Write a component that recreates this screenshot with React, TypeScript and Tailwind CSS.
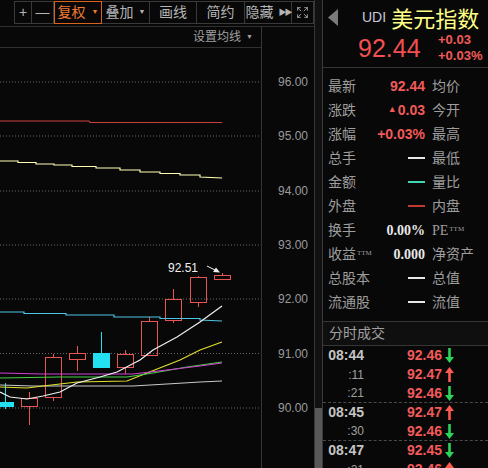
import React from 'react';
import { Expand } from 'lucide-react';

const RED = '#f25a5a';

type Info = { label: React.ReactNode; value: React.ReactNode; label2: React.ReactNode };

const Dash = ({ color }: { color: string }) => (
  <span className="inline-block w-[17px] h-[1.5px]" style={{ backgroundColor: color }} />
);

const Ttm = () => <sup className="text-[7px] font-['Liberation_Serif',serif] ml-[1px] relative -top-[4px]">TTM</sup>;

const infoRows: Info[] = [
  { label: '最新', value: <span className="font-bold text-[#f25a5a]">92.44</span>, label2: '均价' },
  {
    label: '涨跌',
    value: (
      <span className="font-bold text-[#f25a5a] flex items-center">
        <span className="text-[9px] mr-[1px]">▲</span>0.03
      </span>
    ),
    label2: '今开',
  },
  { label: '涨幅', value: <span className="font-bold text-[#f25a5a]">+0.03%</span>, label2: '最高' },
  { label: '总手', value: <Dash color="#e6e6e6" />, label2: '最低' },
  { label: '金额', value: <Dash color="#3fd6b8" />, label2: '量比' },
  { label: '外盘', value: <Dash color="#c03a34" />, label2: '内盘' },
  {
    label: '换手',
    value: <span className="font-bold text-[#e8e8e8] font-['Liberation_Serif',serif]">0.00%</span>,
    label2: (
      <span className="font-['Liberation_Serif',serif]">
        PE<Ttm />
      </span>
    ),
  },
  {
    label: (
      <span>
        收益<Ttm />
      </span>
    ),
    value: <span className="font-bold text-[#e8e8e8] font-['Liberation_Serif',serif]">0.000</span>,
    label2: '净资产',
  },
  { label: '总股本', value: <Dash color="#e6e6e6" />, label2: '总值' },
  { label: '流通股', value: <Dash color="#e6e6e6" />, label2: '流值' },
];

const trades = [
  { t: '08:44', main: true, p: '92.46', up: false, sep: false },
  { t: ':11', main: false, p: '92.47', up: true, sep: false },
  { t: ':21', main: false, p: '92.46', up: false, sep: true },
  { t: '08:45', main: true, p: '92.47', up: true, sep: false },
  { t: ':30', main: false, p: '92.46', up: false, sep: true },
  { t: '08:47', main: true, p: '92.45', up: false, sep: false },
  { t: ':21', main: false, p: '92.46', up: true, sep: false },
];

const Arrow = ({ up }: { up: boolean }) => {
  const c = up ? '#ff5a50' : '#2ed35a';
  return (
    <svg width="9" height="15" viewBox="0 0 9 15">
      {up ? (
        <>
          <line x1="4.5" y1="5" x2="4.5" y2="15" stroke={c} strokeWidth="2.6" />
          <polygon points="0,6 9,6 4.5,0" fill={c} />
        </>
      ) : (
        <>
          <line x1="4.5" y1="0" x2="4.5" y2="10" stroke={c} strokeWidth="2.6" />
          <polygon points="0,9 9,9 4.5,15" fill={c} />
        </>
      )}
    </svg>
  );
};

const tools = [
  { name: '+', w: 'w-[17px]' },
  { name: '—', w: 'w-[22px]' },
  { name: '复权', w: 'w-[48px]', arrow: true, active: true },
  { name: '叠加', w: 'w-[48px]', arrow: true },
  { name: '画线', w: 'w-[47px]' },
  { name: '简约', w: 'w-[48px]' },
  { name: '隐藏', w: 'w-[47px]', more: true },
];

const grid = [82, 136, 191, 245, 299, 353.5, 408];
const axis = ['96.00', '95.00', '94.00', '93.00', '92.00', '91.00', '90.00'];

// x, body top, body bottom, wick top, wick bottom, up?
const candles: [number, number, number, number, number, boolean][] = [
  [-3, 402, 406, 383, 409, false],
  [21, 398, 406, 392, 425, true],
  [45, 357, 397, 354, 401, true],
  [69, 353, 359, 346, 371, true],
  [93, 353, 367, 332, 368, false],
  [117, 354, 367, 350, 374, true],
  [141, 321, 355, 317, 356, true],
  [165, 299, 320, 289, 323, true],
  [190, 277, 302, 276, 307, true],
  [214, 275, 279, 273, 280, true],
];

const lines: [string, string][] = [
  ['#c8403a', '0,121 89,121 90,122.5 222,122.5'],
  ['#ffffb4', '0,161 18,161 18,162.5 36,162.5 36,164 54,164 54,165 72,165 72,166.5 96,166.5 96,168 120,168 120,170 140,170 140,172 160,172 160,173.5 180,173.5 180,175 200,175 200,177 222,178'],
  ['#4cc4e4', '0,312 24,312 24,313.5 66,313.5 66,315 114,315 114,317 160,317 160,318.5 200,318.5 200,320 222,321'],
  ['#c8c8c8', '0,385 33,386 133,386 167,384 200,382 222,381'],
  ['#e0e030', '0,387 27,388 43,386 77,382 127,381 147,373 180,360 200,350 222,342'],
  ['#44d044', '0,378 60,377 127,377 153,373 187,367 222,362'],
  ['#d040d0', '0,373 43,374 133,374 167,370 200,366 222,363'],
  ['#f0f0f0', '0,392 10,397 27,399 43,396 60,392 77,383 100,377 117,372 140,360 153,350 177,337 200,322 222,306'],
];

function Chart() {
  return (
    <svg width="261" height="420" viewBox="0 48 261 420" className="block">
      {grid.map((y) => (
        <line key={y} x1="0" y1={y} x2="261" y2={y} stroke="#6a6a6a" strokeWidth="1" strokeDasharray="1 2" />
      ))}
      {candles.map(([x, bt, bb, wt, wb, up], i) => {
        const c = up ? '#e85454' : '#22e0f0';
        const cx = x + 8.5;
        return (
          <g key={i} shapeRendering="crispEdges">
            <line x1={cx} y1={wt} x2={cx} y2={bt} stroke={c} strokeWidth="1" />
            <line x1={cx} y1={bb} x2={cx} y2={wb} stroke={c} strokeWidth="1" />
            <rect
              x={x + 0.5}
              y={bt + 0.5}
              width="16"
              height={bb - bt}
              fill={up ? 'none' : c}
              stroke={c}
              strokeWidth="1"
            />
          </g>
        );
      })}
      {lines.map(([c, p], i) => (
        <polyline key={i} points={p} fill="none" stroke={c} strokeWidth="1.2" />
      ))}
      <text x="168" y="272" fill="#f0f0f0" fontSize="12" fontFamily="Liberation Sans, sans-serif">
        92.51
      </text>
      <line x1="207" y1="266" x2="216" y2="270.5" stroke="#f0f0f0" strokeWidth="1" />
      <polygon points="220,272.5 213,272 216,267.5" fill="#f0f0f0" />
    </svg>
  );
}

export default function App() {
  return (
    <div className="flex w-[488px] h-[468px] overflow-hidden bg-[#080808] font-['Liberation_Sans','Noto_Sans_CJK_SC',sans-serif]">
      {/* left: chart */}
      <div className="w-[315px] h-full flex flex-col border-r border-[#363636]">
        <div className="h-[27px] border-b border-[#303030] shrink-0">
          <div className="ml-[14px] mt-[1px] h-[23px] w-[300px] flex border border-[#3a3a3a]">
            {tools.map((t) => (
              <div
                key={t.name}
                className={
                  t.active
                    ? `${t.w} h-[23px] -mt-[1px] flex items-center justify-center gap-[6px] border border-[#d8641c] text-[14px] text-[#f07a30]`
                    : `${t.w} h-full flex items-center justify-center gap-[5px] border-r border-[#3a3a3a] text-[14px] text-[#b4b4b4]`
                }
              >
                <span>{t.name}</span>
                {t.arrow && <span className="text-[7px]">▼</span>}
                {t.more && <span className="text-[8px] tracking-[-2px]">▶▶</span>}
              </div>
            ))}
            <div className="flex-1 flex items-center justify-center">
              <Expand size={13} strokeWidth={1.5} color="#b4b4b4" />
            </div>
          </div>
        </div>
        <div className="flex-1 flex">
          <div className="w-[262px] flex flex-col border-r border-[#363636]">
            <div className="h-[21px] border-b border-[#303030] flex items-center justify-end pr-[8px] gap-[5px] text-[12px] text-[#a0a0a0]">
              <span>设置均线</span>
              <span className="text-[7px]">▼</span>
            </div>
            <Chart />
          </div>
          <div className="flex-1 flex flex-col pt-[28px]">
            {axis.map((a) => (
              <div key={a} className="h-[54.3px] flex items-center justify-end pr-[6px] text-[12px] text-[#9a9a9a]">
                {a}
              </div>
            ))}
          </div>
        </div>
      </div>

      {/* scrollbar */}
      <div className="w-[7px] h-full flex flex-col justify-end bg-[#111]">
        <div className="h-[60px] bg-[#585858]" />
      </div>

      {/* right: quote panel */}
      <div className="flex-1 h-full flex flex-col border-l border-[#3a3a3a]">
        <div className="h-[68px] border-b border-[#363636] shrink-0">
          <div className="h-[34px] flex items-center pl-[5px]">
            <svg width="10" height="17" viewBox="0 0 10 17">
              <polygon points="10,0 10,17 0,8.5" fill="#7a7a7a" />
            </svg>
            <span className="ml-[24px] text-[14px] text-[#c8c8d8]">UDI</span>
            <span className="ml-[5px] text-[22px] leading-none text-[#ffff86] font-['Noto_Sans_CJK_SC',sans-serif]">
              美元指数
            </span>
          </div>
          <div className="h-[28px] flex items-center pl-[35px]">
            <span className="w-[80px] text-[25px] leading-[28px] text-[#f25050]">92.44</span>
            <div className="flex flex-col text-[13px] leading-[16px] font-bold text-[#f25a5a]">
              <span>+0.03</span>
              <span>+0.03%</span>
            </div>
          </div>
        </div>

        <div className="pt-[6px] h-[253px] shrink-0">
          {infoRows.map((r, i) => (
            <div key={i} className="h-[24px] flex items-center pl-[5px] text-[14px] text-[#9e9e9e]">
              <div className="w-[50px] whitespace-nowrap">{r.label}</div>
              <div className="w-[47px] flex justify-end items-center">{r.value}</div>
              <div className="ml-[7px] whitespace-nowrap">{r.label2}</div>
            </div>
          ))}
        </div>

        <div className="h-[25px] border-t border-b border-[#363636] bg-[#0f0f0f] flex items-center pl-[6px] text-[14px] text-[#a0a0a0] shrink-0">
          分时成交
        </div>

        <div className="flex flex-col">
          {trades.map((tr, i) => (
            <div
              key={i}
              className={`h-[19px] shrink-0 flex items-center ${tr.sep ? 'border-b border-dashed border-[#4a4a4a]' : ''}`}
            >
              <div
                className={
                  tr.main
                    ? 'w-[41px] text-right text-[14px] font-bold text-[#c4c4c4]'
                    : 'w-[41px] text-right text-[12px] text-[#a0a0a0]'
                }
              >
                {tr.t}
              </div>
              <div className="w-[78px] text-right text-[14px] font-bold" style={{ color: RED }}>
                {tr.p}
              </div>
              <div className="ml-[3px] flex items-center">
                <Arrow up={tr.up} />
              </div>
            </div>
          ))}
        </div>
      </div>
    </div>
  );
}
